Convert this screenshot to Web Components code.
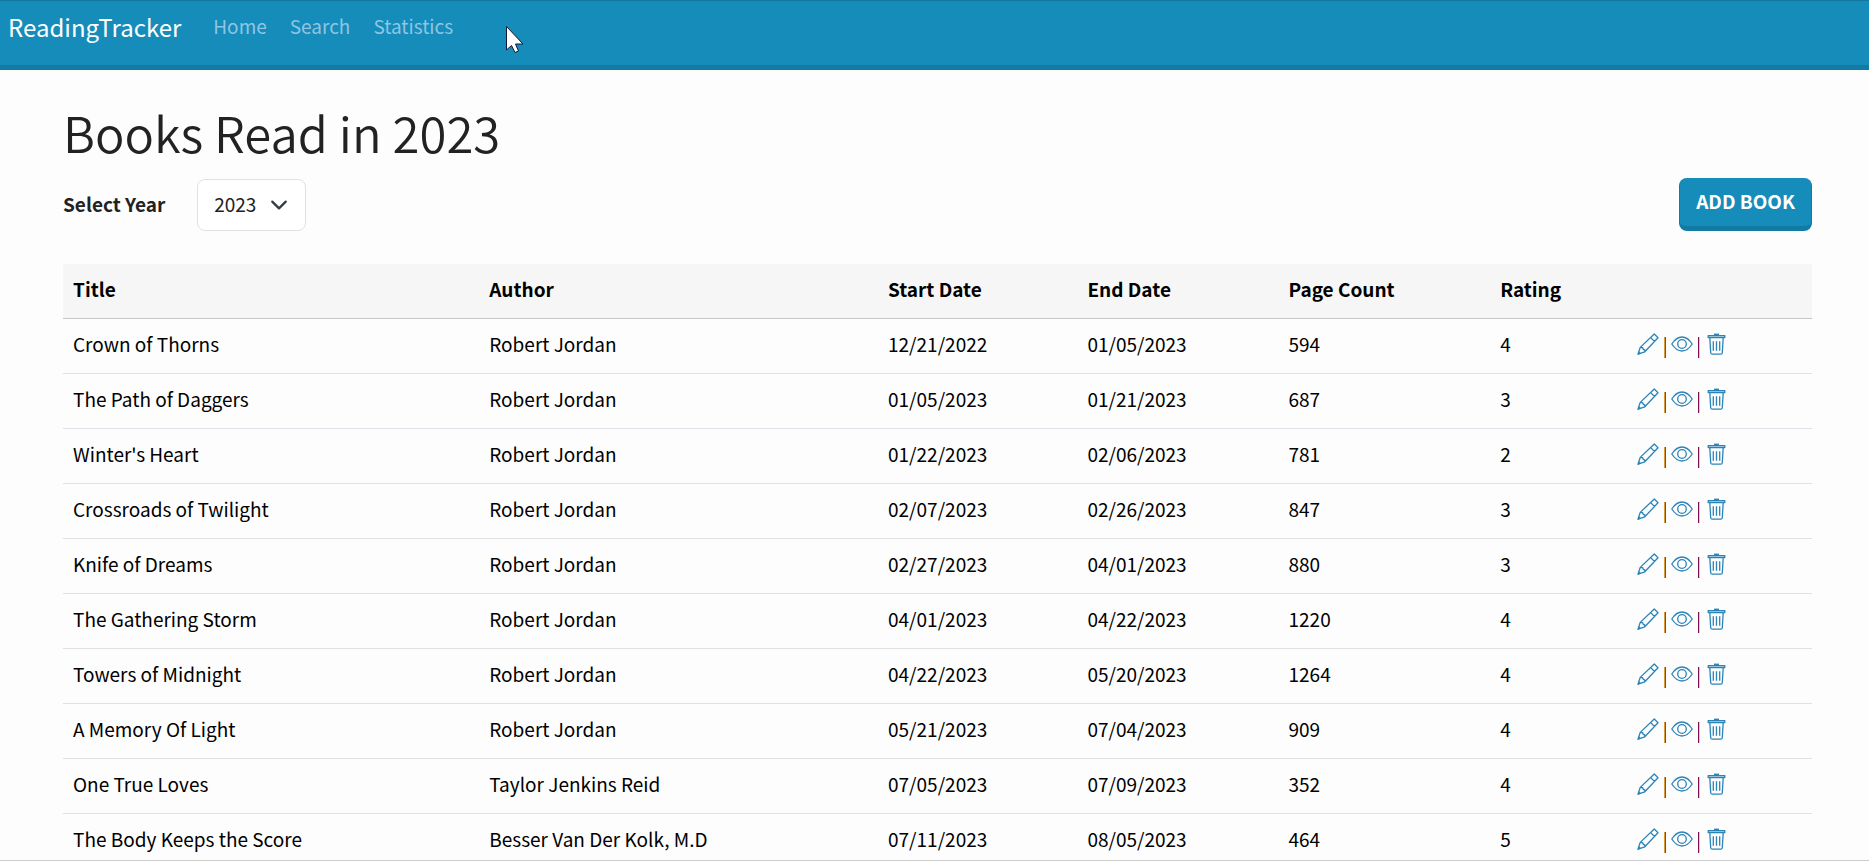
<!DOCTYPE html>
<html lang="en">
<head>
<meta charset="utf-8">
<title>ReadingTracker</title>
<style>
  body {
    margin: 0;
    background: #fdfdfd;
    color: #222;
    font-family: "Noto Sans CJK SC", "Noto Sans", sans-serif;
    font-size: 19px;
    line-height: 34px;
    --primary: #158cba;
    --primary-dark: #127ba3;
    --border: #dee2e6;
  }
</style>
</head>
<body>
<app-shell>
  <nav-bar slot="header" brand="ReadingTracker">
    <nav-link href="#home">Home</nav-link>
    <nav-link href="#search">Search</nav-link>
    <nav-link href="#statistics">Statistics</nav-link>
  </nav-bar>
  <page-title>Books Read in 2023</page-title>
  <tool-bar>
    <year-select></year-select>
    <primary-button slot="end">ADD BOOK</primary-button>
  </tool-bar>
  <book-table></book-table>
</app-shell>
<mouse-pointer></mouse-pointer>

<script>
  const define = (name, html, setup) => {
    const template = document.createElement('template');
    template.innerHTML = html;
    customElements.define(name, class extends HTMLElement {
      constructor() {
        super();
        this.attachShadow({ mode: 'open' }).append(template.content.cloneNode(true));
      }
      connectedCallback() { if (setup) setup(this, this.shadowRoot); }
    });
  };

  define('app-shell', `
    <style>
      :host { display: flex; flex-direction: column; height: 100vh; box-sizing: border-box; overflow: hidden; border-bottom: 1px solid #ccc; }
      main { flex: 1; min-height: 0; overflow-y: auto; scrollbar-width: none; padding: 30px 57px 0 63px; }
    </style>
    <slot name="header"></slot>
    <main><slot></slot></main>`);

  define('nav-bar', `
    <style>
      :host { display: block; }
      nav { display: flex; align-items: flex-start; gap: 32px; padding: 7px 8px 19px; background: var(--primary); border-top: 1px solid #12769d; border-bottom: 5px solid var(--primary-dark); }
      .brand { color: #fff; font-size: 24px; line-height: 38px; text-decoration: none; }
      .links { display: flex; gap: 23px; }
    </style>
    <nav>
      <a class="brand" href="#"></a>
      <div class="links"><slot></slot></div>
    </nav>`,
    (host, root) => { root.querySelector('.brand').textContent = host.getAttribute('brand'); });

  define('nav-link', `
    <style>
      :host { display: block; }
      a { color: #8fc5e2; text-decoration: none; line-height: 36px; }
    </style>
    <a><slot></slot></a>`,
    (host, root) => { root.querySelector('a').href = host.getAttribute('href'); });

  define('page-title', `
    <style>
      :host { display: block; }
      h1 { margin: 0; font-size: 49px; line-height: 64px; font-weight: 350; color: #222; }
    </style>
    <h1><slot></slot></h1>`);

  define('tool-bar', `
    <style>
      :host { display: flex; align-items: center; justify-content: space-between; padding: 14px 0 33px; }
    </style>
    <slot></slot><slot name="end"></slot>`);

  define('year-select', `
    <style>
      :host { display: flex; align-items: center; gap: 32px; }
      label { font-weight: 700; padding-bottom: 2px; }
      .box { display: grid; align-items: center; }
      select, svg { grid-area: 1 / 1; }
      select { appearance: none; font: inherit; color: #222; background: #fff; border: 1px solid var(--border); border-radius: 8px; padding: 7px 48px 9px 16px; margin: 0; }
      svg { justify-self: end; margin-right: 18px; pointer-events: none; }
    </style>
    <label for="year">Select Year</label>
    <div class="box">
      <select id="year"><option>2023</option></select>
      <svg width="18" height="18" viewBox="0 0 16 16" fill="none" stroke="#343a40" stroke-width="2" stroke-linecap="round" stroke-linejoin="round"><path d="m2 5 6 6 6-6"/></svg>
    </div>`);

  define('primary-button', `
    <style>
      :host { display: block; }
      button { font: inherit; font-weight: 700; color: #fff; background: var(--primary); border: 1px solid var(--primary-dark); border-width: 0 1px 5px; border-radius: 8px; padding: 6px 16px 8px; margin: 0; display: block; }
    </style>
    <button type="button"><slot></slot></button>`);

  define('row-actions', `
    <style>
      :host { display: flex; align-items: center; gap: 5px; height: 34px; }
      a { display: block; height: 22px; }
      svg { display: block; fill: none; stroke: #2b84b8; stroke-width: 1.3; stroke-linejoin: round; }
      .solid { fill: #2b84b8; stroke: none; }
      i { width: 2px; height: 21px; margin-top: 7px; }
      .amber { background: linear-gradient(90deg, #d99a3c 50%, #2a6a80 50%); }
      .plum { background: linear-gradient(90deg, #7d0f50 50%, #c4ccec 50%); }
    </style>
    <a href="#edit" aria-label="Edit"><svg width="22" height="22" viewBox="0 0 22 22"><path d="M17.300 1 21 4.700 7.800 18.800 1 21.200 3.200 14.400zM13.700 4.600l3.800 3.900M3.200 14.400l2.500.3.500 1.600 1.500.5.100 2"/><path class="solid" d="M.5 22 1.900 18l2.200 2.400z"/></svg></a>
    <i class="amber"></i>
    <a href="#view" aria-label="View"><svg width="22" height="22" viewBox="0 0 22 22"><path d="M.8 11C3.700 6.500 7 4 11 4s7.300 2.500 10.200 7C18.300 15.500 15 18 11 18S3.700 15.500.8 11z"/><circle cx="11" cy="11" r="4.300"/></svg></a>
    <i class="plum"></i>
    <a href="#delete" aria-label="Delete"><svg width="22" height="22" viewBox="0 0 22 22"><path d="M3.200 2.600h16.600v1.900H3.200zM4.800 4.500h13.400l-.9 15.200q-.1 1.500-1.600 1.500H7.300q-1.500 0-1.600-1.500zM8.300 8.300v9.500M11.500 8.300v9.500M14.700 8.300v9.500"/><path class="solid" d="M9 .6h5v2.200H9z"/></svg></a>`);

  const books = [
    ['Crown of Thorns', 'Robert Jordan', '12/21/2022', '01/05/2023', 594, 4],
    ['The Path of Daggers', 'Robert Jordan', '01/05/2023', '01/21/2023', 687, 3],
    ["Winter's Heart", 'Robert Jordan', '01/22/2023', '02/06/2023', 781, 2],
    ['Crossroads of Twilight', 'Robert Jordan', '02/07/2023', '02/26/2023', 847, 3],
    ['Knife of Dreams', 'Robert Jordan', '02/27/2023', '04/01/2023', 880, 3],
    ['The Gathering Storm', 'Robert Jordan', '04/01/2023', '04/22/2023', 1220, 4],
    ['Towers of Midnight', 'Robert Jordan', '04/22/2023', '05/20/2023', 1264, 4],
    ['A Memory Of Light', 'Robert Jordan', '05/21/2023', '07/04/2023', 909, 4],
    ['One True Loves', 'Taylor Jenkins Reid', '07/05/2023', '07/09/2023', 352, 4],
    ['The Body Keeps the Score', 'Besser Van Der Kolk, M.D', '07/11/2023', '08/05/2023', 464, 5],
  ];

  define('book-table', `
    <style>
      :host { display: block; }
      table { width: 100%; table-layout: fixed; border-collapse: separate; border-spacing: 0; color: #000; }
      th, td { padding: 8px 10px 12px; text-align: left; border-bottom: 1px solid var(--border); }
      th { background: #f6f6f6; border-bottom-color: #c4c6c8; }
    </style>
    <table>
      <colgroup>
        <col style="width:23.8%"><col style="width:22.8%"><col style="width:11.4%"><col style="width:11.5%"><col style="width:12.1%"><col style="width:7.8%"><col>
      </colgroup>
      <thead><tr><th>Title</th><th>Author</th><th>Start Date</th><th>End Date</th><th>Page Count</th><th>Rating</th><th></th></tr></thead>
      <tbody></tbody>
    </table>`,
    (host, root) => {
      const body = root.querySelector('tbody');
      for (const book of books) {
        const row = body.insertRow();
        for (const value of book) row.insertCell().textContent = value;
        row.insertCell().append(document.createElement('row-actions'));
      }
    });

  define('mouse-pointer', `
    <style>
      :host { position: absolute; left: 505px; top: 25px; pointer-events: none; }
      svg { display: block; }
    </style>
    <svg width="20" height="29" viewBox="0 0 20 29"><path d="M1.500 1.500v23.500l5-4.500 3.500 7 3.500-1.500-3-7H18z" fill="#fff" stroke="#0b1a3a" stroke-width="1"/></svg>`);
</script>
</body>
</html>
